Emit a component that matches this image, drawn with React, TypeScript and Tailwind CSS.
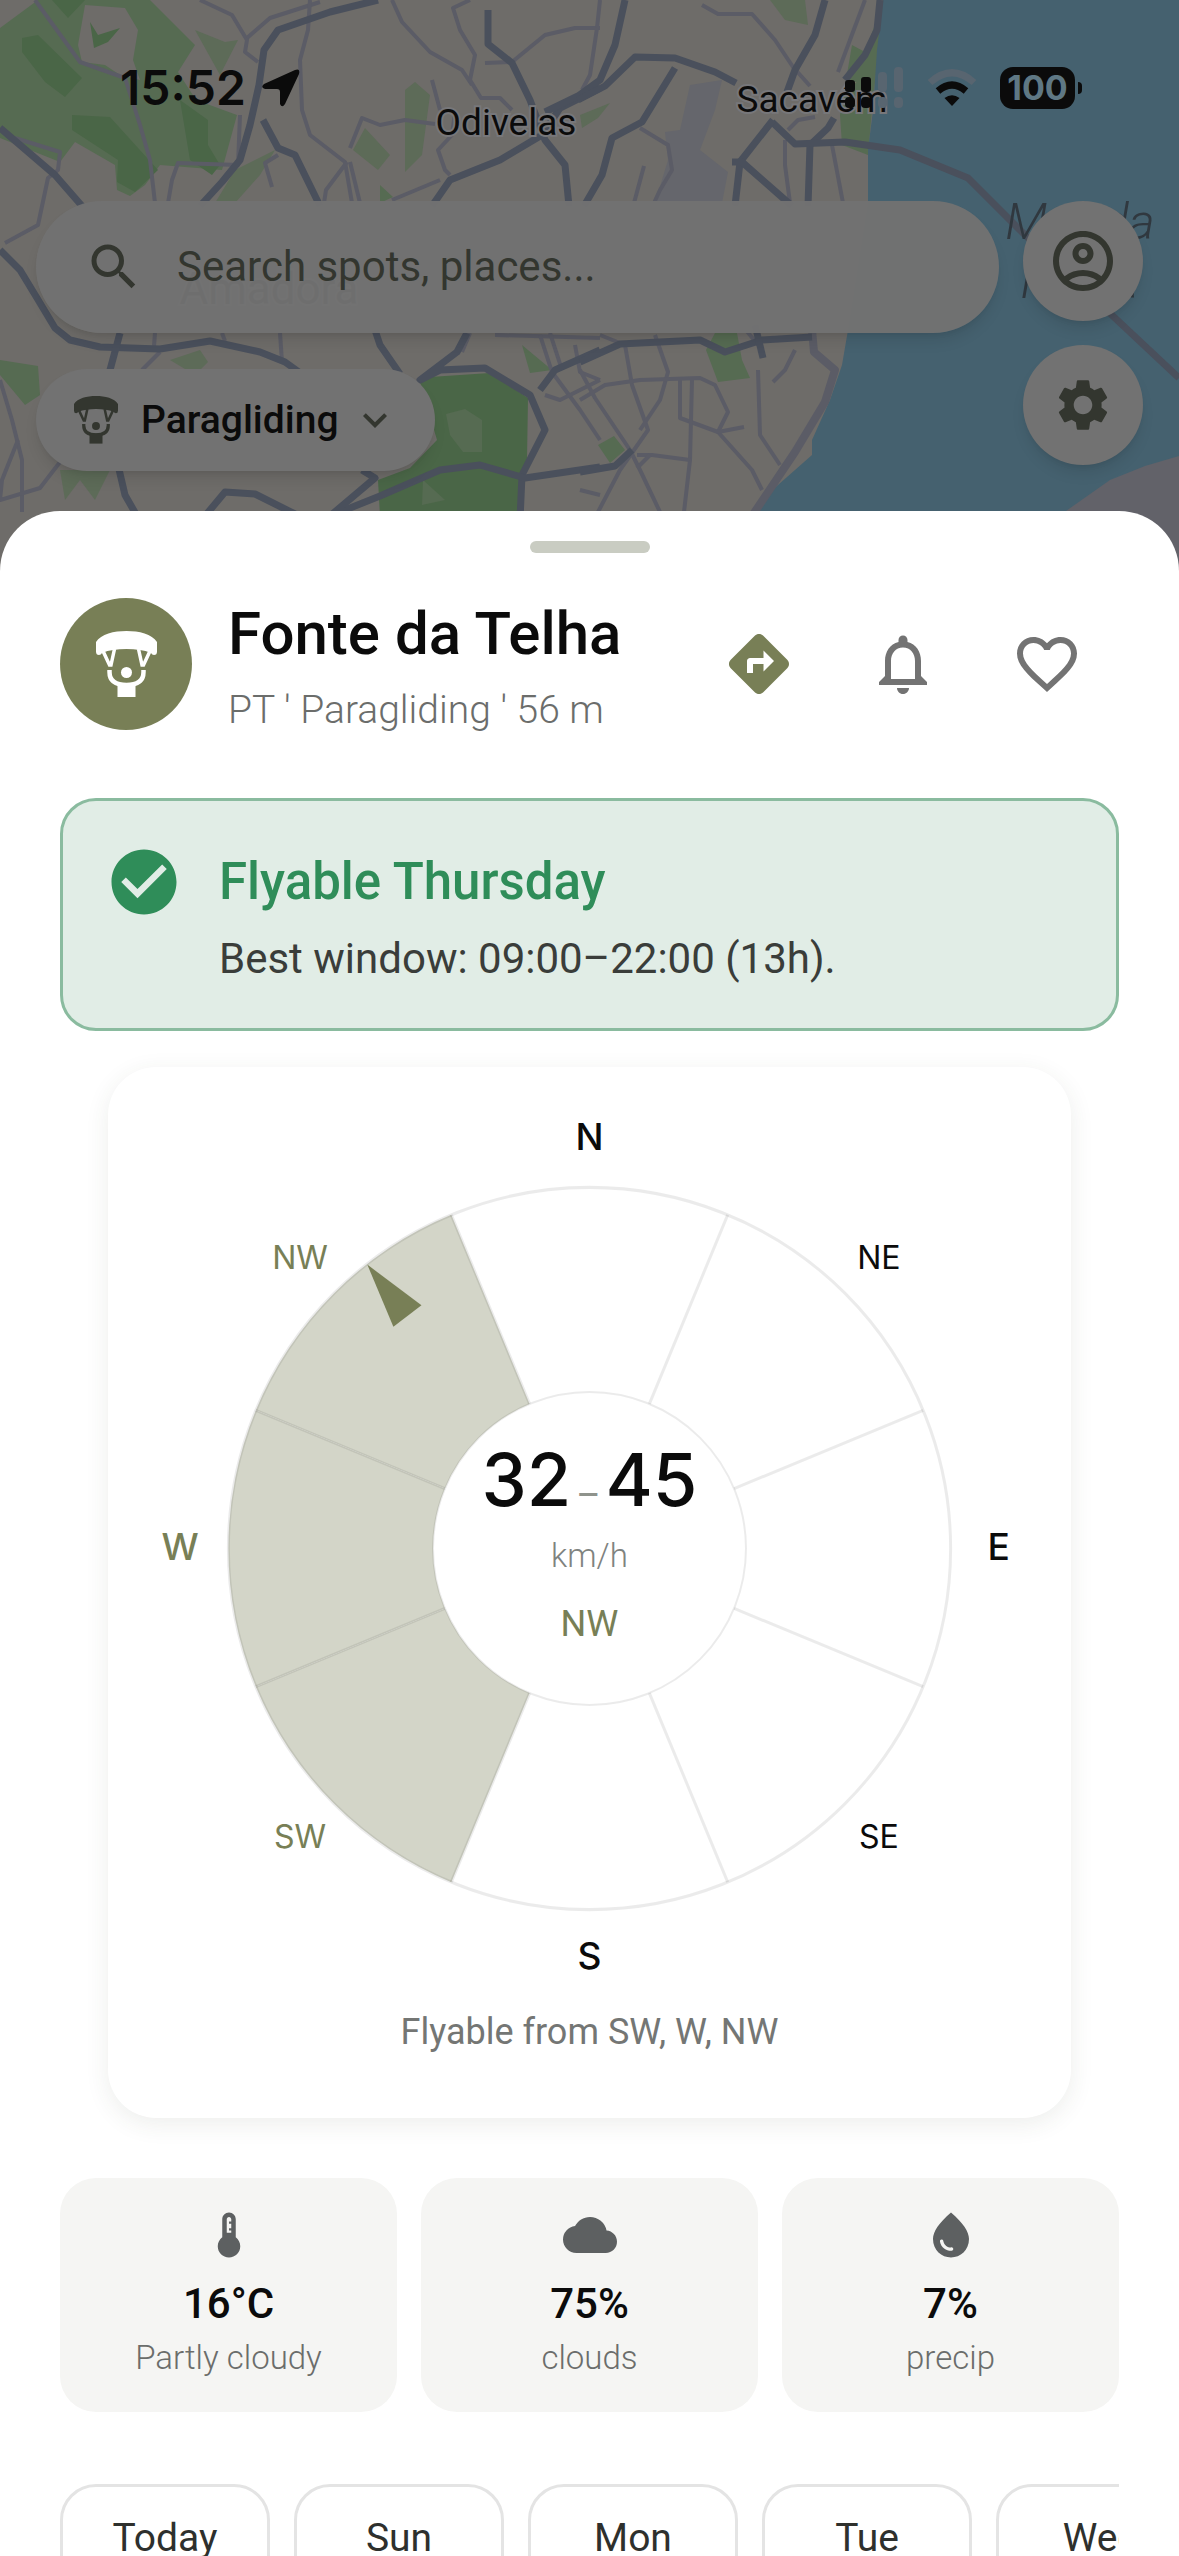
import React from 'react';
import {
  MdCheckCircle,
  MdCloud,
  MdDirections,
  MdFavoriteBorder,
  MdKeyboardArrowDown,
  MdOutlineAccountCircle,
  MdOutlineNotifications,
  MdSearch,
  MdSettings,
  MdThermostat,
  MdWaterDrop,
} from 'react-icons/md';

const minorRoads = [
  'M35 0 L80 62 L125 78 L140 125 L150 160 L155 203',
  'M200 0 L232 15 L247 40 L245 52 L258 62',
  'M247 38 L270 18 L320 2',
  'M310 0 L308 30 L300 60 L302 110 L310 135 L345 162 L352 203',
  'M347 162 L326 190 L324 203',
  'M350 162 L360 203',
  'M392 0 L402 22 L430 52 L462 70 L472 85',
  'M470 0 L453 8 L460 30 L475 55 L470 80 L481 98 L500 98 L512 110',
  'M485 63 L512 62 L545 35 L575 28 L600 28',
  'M432 80 L440 110',
  'M350 148 L362 118 L380 125 L405 120 L435 124',
  'M455 112 L452 135 L438 150 L445 170 L450 175',
  'M392 200 L440 180',
  'M240 115 L238 165 L178 163 L172 180 L168 203',
  'M278 155 L265 163 L272 187',
  'M15 138 L60 152 L58 170 L48 178 L38 225 L5 243',
  'M155 333 L154 346',
  'M222 333 L225 341',
  'M280 333 L282 362',
  'M160 352 L142 370',
  'M0 380 L12 420 L22 460 L22 512',
  'M18 440 L2 480 L0 500 L40 488 L60 462',
  'M495 335 L600 338',
  'M470 333 L462 352',
  'M550 333 L562 370',
  'M540 335 L552 372 L580 410 L600 440',
  'M575 345 L580 372 L600 380',
  'M545 395 L560 400 L600 380',
  'M600 0 L597 28 L590 75 L582 90',
  'M702 5 L718 14 L752 14 L775 40 L793 67 L810 86',
  'M865 0 L850 40 L838 72',
  'M640 128 L668 145 L672 170 L660 190 L654 203',
  'M644 166 L634 203',
  'M785 140 L785 165 L790 203',
  'M832 145 L843 203',
  'M788 130 L798 120 L815 117',
  'M600 335 L625 345 L632 385 L648 430 L620 470 L598 512',
  'M655 335 L668 372 L660 400 L640 430',
  'M580 400 L605 385 L640 380 L700 378 L715 385 L728 412 L718 432 L752 470 L762 490',
  'M680 380 L680 418 L718 432 L744 427',
  'M692 380 L690 460 L684 512',
  'M580 370 L595 398 L630 450 L640 470 L660 512',
  'M637 455 L652 455 L690 460',
  'M637 468 L650 455',
  'M758 370 L760 435 L780 465',
  'M580 490 L600 495',
  'M738 320 L758 345',
  'M795 350 L785 370 L773 382',
];

const majorRoads = [
  'M0 128 L55 175 L82 206',
  'M378 0 L330 12 L278 30 L264 50 L259 85 L250 125 L240 160 L222 182 L200 206',
  'M263 120 L278 148 L295 155 L320 206',
  'M0 250 L20 270 L40 303 L55 328 L70 340 L100 347 L160 349 L210 341 L260 352 L285 362 L310 380',
  'M120 333 L110 370 M118 465 L125 495 L137 516',
  'M375 330 L380 345 L400 374',
  'M488 10 L488 44 L512 63 L530 100 L545 140 L565 165 L569 206',
  'M600 88 L560 108 L542 135 L500 160 L450 180 L432 206',
  'M467 333 L457 352 L420 380 L440 370 L485 368 L530 395 L545 430 L522 475 L520 520',
  'M330 516 L380 496 L440 470 L480 465 L525 478 L600 467',
  'M205 516 L225 492 L255 494 L295 514',
  'M330 516 L375 478 L362 470',
  'M540 390 L555 370 L600 350',
  'M625 0 L615 45 L600 80 L578 96 L545 112',
  'M578 100 L605 86 L635 57 L675 58 L715 72 L736 83',
  'M675 68 L642 122 L612 138 L602 175 L584 206',
  'M825 0 L815 35 L795 70 L787 92',
  'M880 0 L877 30 L865 55 L845 80 M834 118 L828 128 L810 145 L808 206',
  'M772 122 L795 144 L845 142 L900 150 L968 178 L1025 235 L1115 318 L1179 378',
  'M773 120 L740 162 L735 206',
  'M732 162 L742 162 L792 206',
  'M580 362 L620 344 L700 340 L725 352 L762 340 L812 337',
  'M755 325 L763 358',
  'M580 472 L615 466 L632 450',
];

const MapBackdrop: React.FC = () => {
  return (
    <svg
      className="absolute inset-x-0 top-0 h-[600px] w-full bg-[#6e6c69]"
      viewBox="0 0 1179 600"
      preserveAspectRatio="xMidYMin slice"
      aria-hidden="true"
    >
      <path
        fill="#566b52"
        d="M38 0 H150 L195 45 L178 72 L196 100 L237 115 L222 170 L160 165 L145 185 L130 196 L117 190 L115 165 L75 142 L60 162 L0 138 V28Z"
      />
      <path
        fill="#6e6c69"
        d="M85 5 L125 8 L138 30 L133 60 L140 80 L120 75 L105 65 L82 62 L78 45Z"
      />
      <path
        fill="#4a6647"
        d="M52 0 H85 L68 18Z M22 38 L38 35 L82 78 L65 97 L45 82 L22 52Z M72 115 L110 117 L158 170 L135 192 L117 182 L118 160 L72 130Z M180 100 L208 120 L208 145 L220 165 L212 175 L190 160Z M90 22 L98 35 L120 28 L108 42 L94 48Z"
      />
      <path
        fill="#5d6b58"
        d="M365 128 L390 155 L378 170 L353 150Z M405 90 L415 82 L430 95 L422 155 L405 172Z M195 30 L225 42 L238 40 L220 75Z M235 170 L275 150 L260 175 L235 203 H215Z M60 470 L110 470 L95 500 L80 480 L65 500Z M170 360 L200 350 L208 362 L195 375Z M580 115 L610 103 L598 118 L582 128Z M770 0 H805 L808 25 L785 20Z"
      />
      <path
        fill="#566b52"
        d="M0 360 L38 366 L40 395 L25 405 L0 375Z M380 185 L393 197 L380 203Z M522 345 L552 370 L530 373Z M598 445 L614 436 L625 450 L610 463Z M715 333 H737 L742 360 L750 378 L718 382 L706 350Z"
      />
      <path
        fill="#4a6647"
        d="M420 382 L430 377 L490 373 L528 398 L527 460 L518 516 H380 L378 480 L410 468 L437 440Z"
      />
      <path fill="#566b52" d="M446 414 L465 409 L482 420 V452 H463 L450 435Z M423 480 L445 500 L422 505Z" />
      <path
        fill="#65666c"
        d="M690 85 L722 80 L715 110 L700 150 L728 172 L722 203 H655 L668 160 L665 132 L680 130Z"
      />
      <path fill="#566b52" d="M852 45 L865 52 L884 0 L872 110 L868 155 L842 145 L840 115Z" />
      <path
        fill="#45616f"
        d="M883 0 H1179 V600 H700 L757 511 L770 492 L812 455 L812 440 L830 400 L842 365 L848 330 L868 203 L868 150 L873 110 L877 50Z"
      />
      <path fill="#626269" d="M1066 511 L1110 480 L1145 466 L1179 456 V600 H1066Z" />
      <g fill="none" stroke="#5b5c66" strokeLinejoin="round">
        {minorRoads.map((d) => (
          <path key={d} d={d} strokeWidth="4" />
        ))}
        <path d="M812 330 L814 352 L835 370 L825 402 L795 452 L752 516" strokeWidth="8" />
      </g>
      <g fill="none" stroke="#4a505c" strokeWidth="7" strokeLinejoin="round">
        {majorRoads.map((d) => (
          <path key={d} d={d} />
        ))}
      </g>
      <g
        fill="#0b0b0b"
        stroke="#77777a"
        strokeWidth="4"
        paintOrder="stroke"
        textAnchor="middle"
        fontFamily="Roboto, sans-serif"
      >
        <text x="506" y="135" fontSize="37">Odivelas</text>
        <text x="812" y="112" fontSize="37">Sacavém</text>
        <text x="269" y="304" fontSize="44">Amadora</text>
      </g>
      <g
        fill="#30383f"
        textAnchor="middle"
        fontStyle="italic"
        fontWeight="300"
        fontSize="50"
        fontFamily="Roboto, sans-serif"
      >
        <text x="1080" y="239">Mar da</text>
        <text x="1080" y="298">Palha</text>
      </g>
    </svg>
  );
};

const ParagliderIcon: React.FC<{ className?: string }> = ({ className }) => {
  return (
    <svg viewBox="0 0 61 66" className={className} fill="currentColor" aria-hidden="true">
      <path d="M0 11 C5 3 18 0 30.500 0 S56 3 61 11 V20.500 Q61 24 58 24 Q56 24 55 22 C48 19 40 18 30.500 18 S13 19 6 22 Q5 24 3 24 Q0 24 0 20.500Z" />
      <g fill="none" stroke="currentColor" strokeWidth="3.500">
        <path d="M7 20 L13.500 34 H15 L18.500 18" />
        <path d="M54 20 L47.500 34 H46 L42.500 18" />
        <path d="M13.500 39 V41 C13.500 50 20 54 30.500 54 S47.500 50 47.500 41 V39" strokeWidth="4.500" />
      </g>
      <circle cx="30.500" cy="41.500" r="5.500" />
      <path d="M21.500 52 H39.500 V66 H21.500Z" />
    </svg>
  );
};

const StatusBar: React.FC = () => {
  return (
    <div className="flex h-16 items-center justify-between pr-[97px] pl-[120px] text-[#0b0b0b]">
      <div className="flex items-center gap-4">
        <span className="font-[Inter,sans-serif] text-[48px] leading-[60px] font-semibold">15:52</span>
        <svg width="38" height="38" viewBox="0 0 38 38" fill="currentColor" aria-hidden="true">
          <path d="M33 1 Q38.500 -1 37 5 L23 35 Q20 39.500 18 35 V23 Q18 20 15 20 H3 Q-2 18.500 2 15Z" />
        </svg>
      </div>
      <div className="flex items-center gap-[23px]">
        <svg width="59" height="42" viewBox="0 0 59 42" fill="currentColor" aria-hidden="true">
          <rect x="0" y="13" width="10" height="12" rx="3" />
          <rect x="16" y="10" width="10" height="15" rx="3" />
          <g fill="#586570">
            <rect x="33" y="5" width="9" height="20" rx="4" />
            <rect x="49" y="0" width="9" height="25" rx="4" />
            <rect x="33" y="30" width="9" height="11" rx="4" />
            <rect x="49" y="30" width="9" height="11" rx="4" />
          </g>
          <rect x="0" y="30" width="10" height="11" rx="4" />
          <rect x="16" y="30" width="10" height="11" rx="4" />
        </svg>
        <svg width="50" height="38" viewBox="0 0 50 38" fill="none" strokeWidth="7" aria-hidden="true">
          <path d="M3 13.500 Q25 -6 47 13.500" stroke="#586570" />
          <path d="M11 22 Q25 10 39 22" stroke="#0b0b0b" />
          <path d="M17.500 29 Q25 23.500 32.500 29 L25 37Z" fill="#0b0b0b" />
        </svg>
        <div className="flex items-center gap-[3px]">
          <span className="flex h-[42px] w-[75px] items-center justify-center rounded-[13px] bg-[#0b0b0b] font-[Inter,sans-serif] text-[34px] leading-none font-bold text-[#5f7884]">
            100
          </span>
          <span className="h-3 w-1 rounded-r-full bg-[#0b0b0b]"></span>
        </div>
      </div>
    </div>
  );
};

const MapControls: React.FC = () => {
  return (
    <div className="mt-[81px] flex gap-6 px-9 text-[#33362f]">
      <div className="flex flex-1 flex-col items-start gap-9">
        <label className="flex h-[132px] w-full items-center gap-[33px] rounded-full bg-[#727272]/97 px-12 shadow-lg">
          <MdSearch className="size-[60px] shrink-0" />
          <input
            type="search"
            aria-label="Search spots, places"
            placeholder="Search spots, places..."
            className="w-full bg-transparent text-[42px] leading-[60px] outline-none placeholder:text-[#33362f]"
          />
        </label>
        <div className="relative flex h-[102px] items-center rounded-full bg-[#727272] shadow-lg">
          <ParagliderIcon className="absolute left-[38px] w-11" />
          <select
            aria-label="Activity"
            className="h-full appearance-none rounded-full bg-transparent pr-[96px] pl-[105px] text-[39px] font-medium text-[#0b0b0b]"
          >
            <option>Paragliding</option>
          </select>
          <MdKeyboardArrowDown className="pointer-events-none absolute right-9 size-12" />
        </div>
      </div>
      <div className="flex flex-col gap-6">
        <button
          type="button"
          aria-label="Account"
          className="flex size-[120px] items-center justify-center rounded-full bg-[#727272] shadow-lg"
        >
          <MdOutlineAccountCircle className="size-[72px]" />
        </button>
        <button
          type="button"
          aria-label="Settings"
          className="flex size-[120px] items-center justify-center rounded-full bg-[#727272] shadow-lg"
        >
          <MdSettings className="size-[62px]" />
        </button>
      </div>
    </div>
  );
};

const SpotHeader: React.FC = () => {
  return (
    <div className="mt-[45px] flex items-start">
      <div className="flex size-[132px] shrink-0 items-center justify-center rounded-full bg-[#787f56] text-white">
        <ParagliderIcon className="w-[61px]" />
      </div>
      <div className="ml-9 flex-1">
        <h1 className="text-[60px] leading-[72px] font-medium whitespace-nowrap text-[#0b0b0b]">Fonte da Telha</h1>
        <p className="mt-3 text-[39px] leading-[56px] font-light whitespace-nowrap text-[#6b6d6b]">
          PT ' Paragliding ' 56 m
        </p>
      </div>
      <div className="flex text-[#737373]">
        <button type="button" aria-label="Directions" className="flex h-[132px] w-36 items-center justify-center">
          <MdDirections className="size-[72px] text-[#787f56]" />
        </button>
        <button type="button" aria-label="Notifications" className="flex h-[132px] w-36 items-center justify-center">
          <MdOutlineNotifications className="size-[72px]" />
        </button>
        <button type="button" aria-label="Favorite" className="flex h-[132px] w-36 items-center justify-center">
          <MdFavoriteBorder className="size-[72px]" />
        </button>
      </div>
    </div>
  );
};

const FlyableBanner: React.FC = () => {
  return (
    <div className="mt-[60px] flex gap-9 rounded-[36px] border-[3px] border-[#8abb9f] bg-[#e1ede6] px-[42px] pt-[45px] pb-[42px]">
      <div className="flex h-[72px] items-center">
        <MdCheckCircle className="size-[78px] text-[#2f8d59]" />
      </div>
      <div>
        <h2 className="text-[51px] leading-[72px] font-medium text-[#2f8d59]">Flyable Thursday</h2>
        <p className="mt-[14px] text-[42px] leading-[54px] text-[#3a3d3a]">Best window: 09:00–22:00 (13h).</p>
      </div>
    </div>
  );
};

const CENTER = 480;
const OUTER = 360;
const INNER = 156;
const LABEL = 408;

const directions = ['N', 'NE', 'E', 'SE', 'S', 'SW', 'W', 'NW'];
const flyable = ['SW', 'W', 'NW'];

const point = (angle: number, radius: number) => {
  const rad = (angle * Math.PI) / 180;
  return [CENTER + radius * Math.sin(rad), CENTER - radius * Math.cos(rad)];
};

const sectorPath = (index: number) => {
  const start = index * 45 - 22.5;
  const end = start + 45;
  const [x1, y1] = point(start, INNER);
  const [x2, y2] = point(start, OUTER);
  const [x3, y3] = point(end, OUTER);
  const [x4, y4] = point(end, INNER);
  return `M${x1} ${y1} L${x2} ${y2} A${OUTER} ${OUTER} 0 0 1 ${x3} ${y3} L${x4} ${y4} A${INNER} ${INNER} 0 0 0 ${x1} ${y1}Z`;
};

const WindCompass: React.FC = () => {
  return (
    <div className="mx-12 mt-9 rounded-[48px] bg-white pb-[59px] shadow-[0_6px_24px_rgba(60,65,40,0.09)]">
      <svg viewBox="0 0 960 930" className="w-full" role="img" aria-label="Wind direction compass">
        {directions.map((name, index) => (
          <path
            key={name}
            d={sectorPath(index)}
            fill={flyable.includes(name) ? '#d3d5c8' : '#ffffff'}
          />
        ))}
        <g fill="none" stroke="#000000" strokeOpacity="0.08" strokeWidth="3">
          <circle cx={CENTER} cy={CENTER} r={OUTER} />
          <circle cx={CENTER} cy={CENTER} r={INNER} strokeWidth="2" />
          {directions.map((name, index) => {
            const [x1, y1] = point(index * 45 + 22.5, INNER);
            const [x2, y2] = point(index * 45 + 22.5, OUTER);
            return <line key={name} x1={x1} y1={y1} x2={x2} y2={y2} />;
          })}
        </g>
        <path d="M258.500 197 L312.500 237.500 L284.500 259Z" fill="#787f56" />
        {directions.map((name, index) => {
          const [x, y] = point(index * 45, LABEL);
          const cardinal = name.length === 1;
          return (
            <text
              key={name}
              x={x}
              y={cardinal ? y + 11 : y + 10}
              textAnchor="middle"
              fontFamily="Inter, sans-serif"
              fontSize={cardinal ? 37 : 32}
              fontWeight={cardinal ? 500 : 400}
              fill={flyable.includes(name) ? '#787f56' : '#0b0b0b'}
            >
              {name}
            </text>
          );
        })}
        <g textAnchor="middle">
          <text x={CENTER} y="438" fontFamily="Inter, sans-serif" fontSize="72" fontWeight="500" fill="#0b0b0b">
            32
            <tspan dx="8" fontSize="36" fontWeight="400" fill="#8f938c">–</tspan>
            <tspan dx="8">45</tspan>
          </text>
          <text x={CENTER} y="498" fontFamily="Roboto, sans-serif" fontSize="33" fontWeight="300" fill="#7f837f">
            km/h
          </text>
          <text x={CENTER} y="567" fontFamily="Roboto, sans-serif" fontSize="36" fill="#787f56">
            NW
          </text>
        </g>
      </svg>
      <p className="mt-[5px] text-center text-[36px] leading-[54px] text-[#747674]">Flyable from SW, W, NW</p>
    </div>
  );
};

const stats = [
  { icon: MdThermostat, value: '16°C', label: 'Partly cloudy' },
  { icon: MdCloud, value: '75%', label: 'clouds' },
  { icon: MdWaterDrop, value: '7%', label: 'precip' },
];

const WeatherStats: React.FC = () => {
  return (
    <div className="mt-[60px] grid grid-cols-3 gap-6">
      {stats.map(({ icon: Icon, value, label }) => (
        <div key={label} className="flex flex-col items-center rounded-[36px] bg-[#f5f5f3] py-[30px]">
          <Icon className="size-[54px] text-[#5d6061]" />
          <span className="mt-3 text-[42px] leading-[60px] font-medium text-[#0b0b0b]">{value}</span>
          <span className="text-[33px] leading-[48px] font-light text-[#6b6d6b]">{label}</span>
        </div>
      ))}
    </div>
  );
};

const days = ['Today', 'Sun', 'Mon', 'Tue', 'Wed'];

const DayPicker: React.FC = () => {
  return (
    <div className="mt-[72px] flex gap-6 overflow-hidden">
      {days.map((day) => (
        <button
          key={day}
          type="button"
          className="w-[210px] shrink-0 rounded-[36px] border-[3px] border-[#e4e4e4] pt-[27px] pb-[60px] text-[39px] leading-[48px] text-[#2e302d]"
        >
          {day}
        </button>
      ))}
    </div>
  );
};

const App: React.FC = () => {
  return (
    <div className="relative flex h-screen flex-col overflow-hidden bg-white font-[Roboto,sans-serif]">
      <MapBackdrop />
      <header className="relative shrink-0 pt-14 pb-10">
        <StatusBar />
        <MapControls />
      </header>
      <main className="relative flex-1 overflow-hidden rounded-t-[60px] bg-white px-[60px] pt-[30px]">
        <div className="mx-auto h-3 w-[120px] rounded-full bg-[#c9ccc2]"></div>
        <SpotHeader />
        <FlyableBanner />
        <WindCompass />
        <WeatherStats />
        <DayPicker />
      </main>
    </div>
  );
};

export default App;
